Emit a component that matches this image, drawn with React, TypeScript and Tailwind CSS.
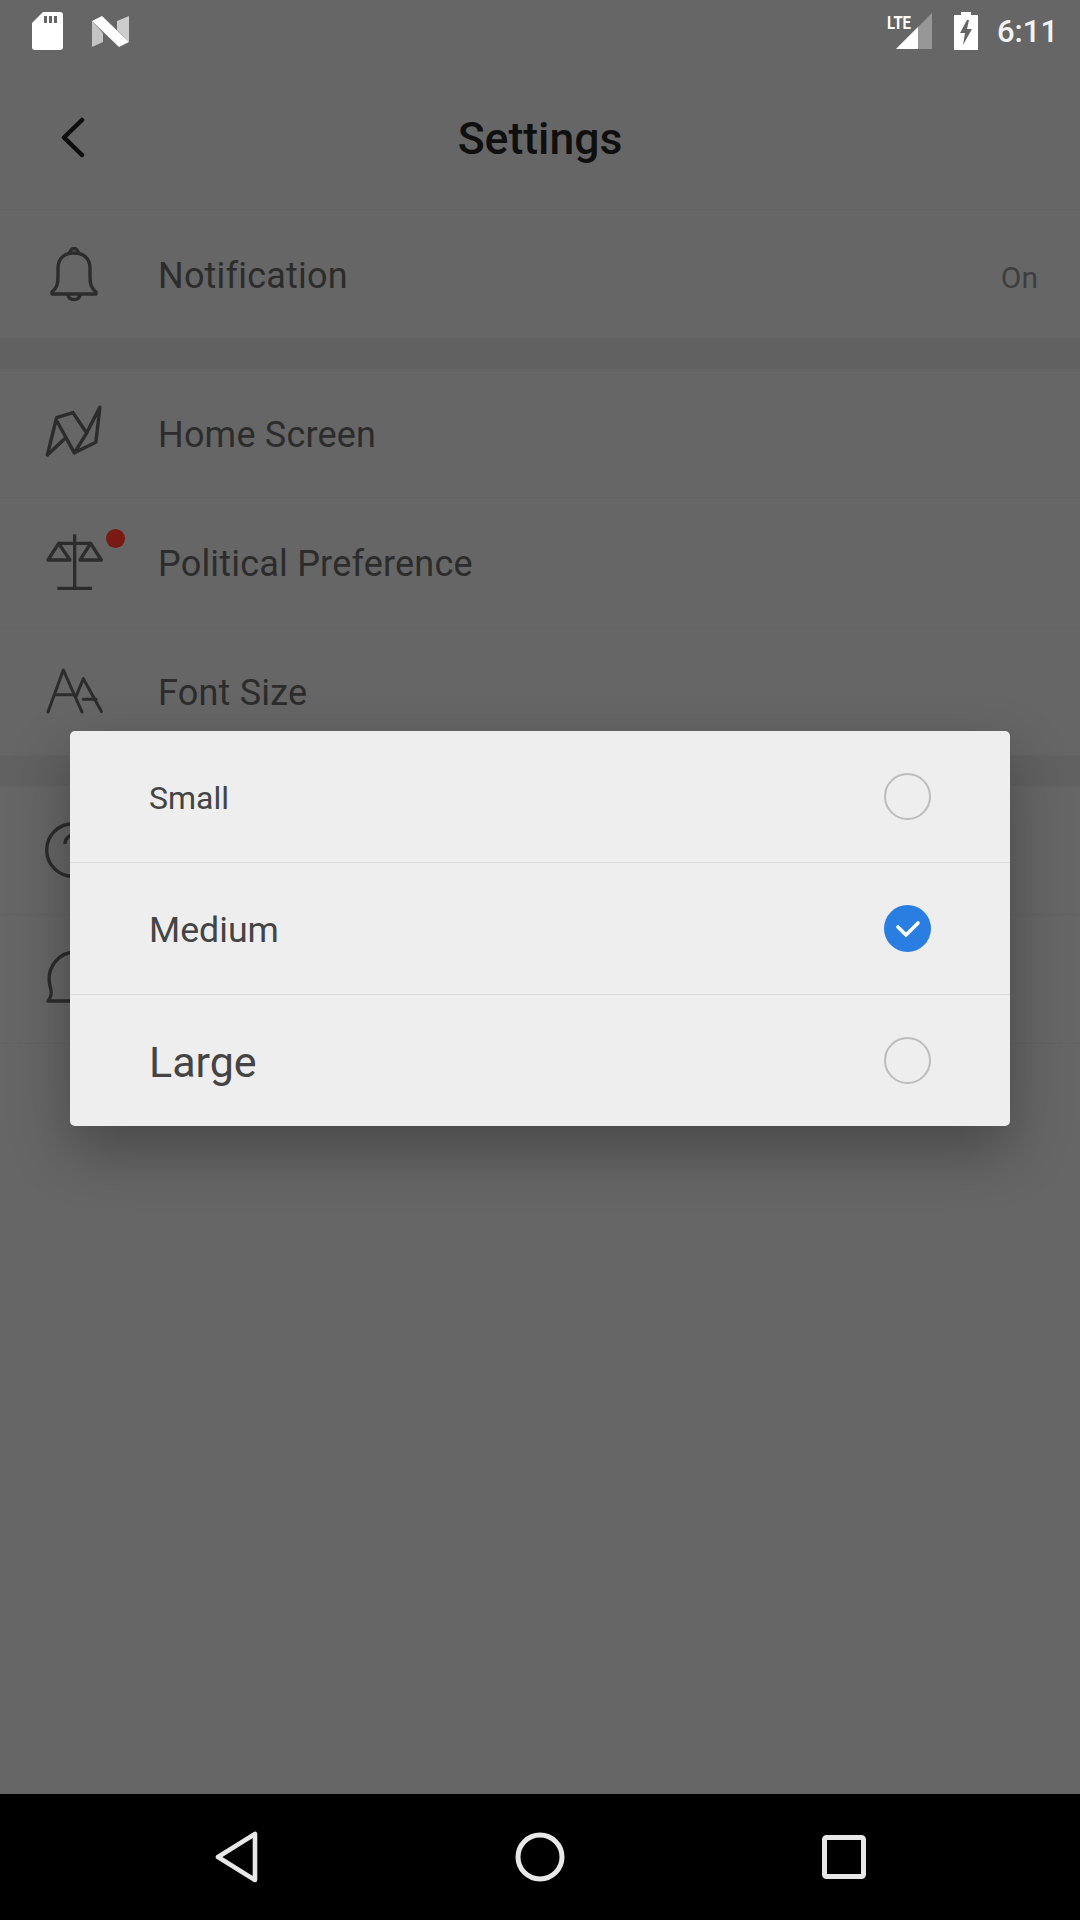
import type { ReactNode } from 'react';

function BackIcon() {
  return (
    <svg width="24" height="42" viewBox="0 0 24 42" fill="none" stroke="#0d0d0d" strokeWidth="4.5" strokeLinecap="round" strokeLinejoin="round">
      <path d="M21 3 L3 20.5 L21 38" />
    </svg>
  );
}

function BellIcon() {
  return (
    <svg className="ml-[3px] mt-[2px]" width="50" height="56" viewBox="0 0 50 56" fill="none" stroke="#2c2c2c" strokeWidth="3.4">
      <path d="M3 45 C8 41 9 37 9 29 L9 21 C9 11 16 6 25 6 C34 6 41 11 41 21 L41 29 C41 37 42 41 47 45 L47 47 L3 47 Z" strokeLinejoin="round" />
      <path d="M21 6 C21 -0 29 -0 29 6" />
      <path d="M19 48 C20 54 30 54 31 48" />
    </svg>
  );
}

function HomeIcon() {
  return (
    <svg className="ml-[-1px] mb-[4px]" width="58" height="54" viewBox="136 74 170 156" fill="none" stroke="#2c2c2c" strokeWidth="10" strokeLinejoin="round" strokeLinecap="round">
      <path d="M143 222 L170 113 L218 98 L258 158 L222 216 L172 125" />
      <path d="M143 222 L192 176" />
      <path d="M222 216 L285 185 L297 82 L258 158" />
    </svg>
  );
}

function ScaleIcon() {
  return (
    <svg width="58" height="58" viewBox="134 460 174 174" fill="none" stroke="#2c2c2c" strokeWidth="10" strokeLinejoin="round">
      <path d="M220 464 L220 626" />
      <path d="M168 626 L272 626" />
      <path d="M172 491 L268 491" />
      <path d="M140 541 L172 491 L206 541 Z" />
      <path d="M236 541 L268 491 L300 541 Z" />
    </svg>
  );
}

function FontIcon() {
  return (
    <svg width="58" height="46" viewBox="134 864 174 138" fill="none" stroke="#2c2c2c" strokeWidth="9" strokeLinecap="round" strokeLinejoin="round">
      <path d="M140 996 L186 870 L242 996" />
      <path d="M160 944 L220 944" />
      <path d="M224 950 L246 896 L300 994" />
      <path d="M246 958 L284 958" />
    </svg>
  );
}

function HelpIcon() {
  return (
    <svg className="ml-[-1px]" width="56" height="56" viewBox="0 0 56 56" fill="none" stroke="#2c2c2c" strokeWidth="3.4">
      <circle cx="28" cy="28" r="26.3" />
      <path d="M20 22 C20 10 38 10 38 22 C38 29 28 30 28 38" />
    </svg>
  );
}

function ChatIcon() {
  return (
    <svg className="mb-[4px]" width="56" height="54" viewBox="0 0 56 54" fill="none" stroke="#2c2c2c" strokeWidth="3.4">
      <path d="M2 51 C6 46 6 42 4 36 C0 18 12 2 30 2 L54 2 L54 51 Z" strokeLinejoin="round" />
    </svg>
  );
}

function StatusBar() {
  return (
    <div className="h-[70px] flex items-start justify-between">
      <div className="flex">
        {/* sd card */}
        <svg className="ml-[32px] mt-[12px]" width="31" height="38" viewBox="0 0 31 38">
          <path d="M11 0 L28 0 Q31 0 31 3 L31 35 Q31 38 28 38 L3 38 Q0 38 0 35 L0 11 Z" fill="#fff" />
          <path d="M12 4 h3 v7 h-3 z M17 4 h3 v7 h-3 z M22 4 h3 v7 h-3 z" fill="#666" />
        </svg>
        {/* n logo */}
        <svg className="ml-[29px] mt-[16px]" width="37" height="31" viewBox="0 0 37 31">
          <path d="M0 5 L11 17 L11 26 L0 31 Z" fill="#c4c4c4" />
          <path d="M25 5 L37 0 L37 26 L25 14 Z" fill="#cdcdcd" />
          <path d="M0 5 L10 0 L37 26 L27 31 Z" fill="#fff" />
        </svg>
      </div>
      <div className="flex relative">
        <svg className="mt-[12px]" width="46" height="38" viewBox="0 0 46 38">
          <text x="0" y="17" fontFamily="Roboto, sans-serif" fontWeight="700" fontSize="19" fill="#fff" textLength="24" lengthAdjust="spacingAndGlyphs">LTE</text>
          <path d="M9 37 L45 1 L45 37 Z" fill="#979797" />
          <path d="M9 37 L31 15 L31 37 Z" fill="#fff" />
        </svg>
        <svg className="ml-[21px] mt-[12px]" width="24" height="38" viewBox="0 0 24 38">
          <path d="M7 0 H17 V3 H24 V38 H0 V3 H7 Z" fill="#fff" />
          <path d="M13 8 L6 21 H11 L9 33 L18 17 H13 L15 8 Z" fill="#666" />
        </svg>
        <span className="ml-[19px] mr-[22px] mt-[14px] text-[31px] leading-[36px] font-medium text-[#f4f4f4]">6:11</span>
      </div>
    </div>
  );
}

function Row({ icon, label, right, dot }: { icon: ReactNode; label: string; right?: string; dot?: boolean }) {
  return (
    <div className="h-[129px] border-b border-[#626262] flex items-center">
      <div className="relative w-[158px] pl-[46px] flex items-center">
        {icon}
        {dot && <span className="absolute left-[106px] top-[-4px] w-[19px] h-[19px] rounded-full bg-[#7a1a14]" />}
      </div>
      <span className="mt-[3px] text-[36px] text-[#2c2c2c] tracking-[0.2px]">{label}</span>
      {right && <span className="ml-auto mr-[42px] mt-[6px] text-[30px] text-[#3e3e3e]">{right}</span>}
    </div>
  );
}

function SizeOption({ label, textClass, checked }: { label: string; textClass: string; checked?: boolean }) {
  return (
    <div className="flex-1 flex items-center justify-between pl-[79px] pr-[79px] border-b border-[#d9d9d9] last:border-b-0">
      <span className={`${textClass} mt-[3px] text-[#444444]`}>{label}</span>
      {checked ? (
        <span className="w-[47px] h-[47px] rounded-full bg-[#2a7de1] flex items-center justify-center">
          <svg width="26" height="20" viewBox="0 0 26 20" fill="none" stroke="#fff" strokeWidth="3.6" strokeLinecap="round" strokeLinejoin="round">
            <path d="M3 8 L11 16 L23 4" />
          </svg>
        </span>
      ) : (
        <span className="w-[47px] h-[47px] rounded-full border-2 border-[#bcbcbc]" />
      )}
    </div>
  );
}

export default function App() {
  return (
    <div className="relative w-[1080px] h-[1920px] flex flex-col bg-[#666666] font-[Roboto,sans-serif] overflow-hidden">
      <StatusBar />

      <div className="h-[140px] border-b border-[#626262] flex items-center relative">
        <div className="ml-[61px] mt-[-4px]">
          <BackIcon />
        </div>
        <span className="absolute left-0 right-0 text-center mt-[-1px] text-[44.5px] font-medium text-[#0f0f0f]">Settings</span>
      </div>

      <Row icon={<BellIcon />} label="Notification" right="On" />
      <div className="h-[30px] bg-[#616161]" />
      <Row icon={<HomeIcon />} label="Home Screen" />
      <Row icon={<ScaleIcon />} label="Political Preference" dot />
      <Row icon={<FontIcon />} label="Font Size" />
      <div className="h-[30px] bg-[#616161]" />
      <Row icon={<HelpIcon />} label="Help" />
      <Row icon={<ChatIcon />} label="Feedback" />

      <div className="flex-1" />

      <div className="h-[126px] bg-black flex items-center relative">
        <svg className="ml-[214px]" width="44" height="52" viewBox="0 0 44 52" fill="none" stroke="#e8e8e8" strokeWidth="4.6" strokeLinejoin="round">
          <path d="M4 26 L41 3 L41 49 Z" />
        </svg>
        <svg className="ml-[257px]" width="50" height="50" viewBox="0 0 50 50" fill="none" stroke="#e8e8e8" strokeWidth="5">
          <circle cx="25" cy="25" r="22" />
        </svg>
        <svg className="ml-[257px]" width="44" height="44" viewBox="0 0 44 44" fill="none" stroke="#e8e8e8" strokeWidth="5" strokeLinejoin="round">
          <rect x="2.5" y="2.5" width="39" height="39" rx="2" />
        </svg>
      </div>

      {/* font size dialog */}
      <div className="absolute left-[70px] top-[731px] w-[940px] h-[395px] rounded-[5px] bg-[#eeeeee] flex flex-col shadow-[0_24px_60px_rgba(0,0,0,0.3)]">
        <SizeOption label="Small" textClass="text-[32px]" />
        <SizeOption label="Medium" textClass="mt-[4px] text-[35.7px]" checked />
        <SizeOption label="Large" textClass="text-[43px]" />
      </div>
    </div>
  );
}
